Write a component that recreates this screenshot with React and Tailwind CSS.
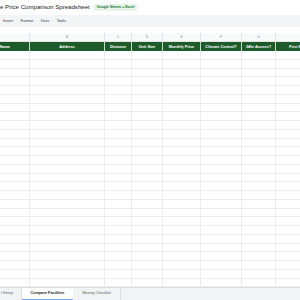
const columns = [
  { letter: 'A', title: 'Facility Name' },
  { letter: 'B', title: 'Address' },
  { letter: 'C', title: 'Distance' },
  { letter: 'D', title: 'Unit Size' },
  { letter: 'E', title: 'Monthly Price' },
  { letter: 'F', title: 'Climate Control?' },
  { letter: 'G', title: '24hr Access?' },
  { letter: 'H', title: 'First Month Free?' }
]

const gridCols = 'grid grid-cols-[64px_75px_27px_31px_38px_41px_34px_60px]'

export default function App() {
  const rows = Array.from({ length: 30 })

  return (
    <div className="w-[300px] h-[300px] overflow-hidden bg-white flex flex-col font-['Liberation_Sans',Arial,sans-serif]">
      {/* Title */}
      <div className="h-[15px] shrink-0 flex items-center gap-[4px]">
        <span className="text-[6.1px] leading-none text-[#202124] whitespace-nowrap">e Price Comparison Spreadsheet</span>
        <span className="bg-[#e6f4ea] text-[#137333] text-[3.5px] leading-none rounded-[2px] px-[3px] py-[1.8px] font-semibold whitespace-nowrap">
          Google Sheets + Excel
        </span>
      </div>

      {/* Menu */}
      <div className="h-[12px] shrink-0 bg-[#f3f4f5] flex items-center pl-[3px] gap-[7.5px] text-[4px] text-[#3c4043]">
        <span>Insert</span>
        <span>Format</span>
        <span>Data</span>
        <span>Tools</span>
      </div>

      {/* Sheet */}
      <div className="flex-1 overflow-hidden pt-[6px]">
        <div className="ml-[-34px] w-[370px]">
          <div className={`${gridCols} h-[9px] bg-[#f8f9fa] border-b border-[#e3e3e3]`}>
            {columns.map((c) => (
              <div key={c.letter} className="flex items-center justify-center border-r border-[#e3e3e3] text-[3.2px] text-[#80868b]">
                {c.letter}
              </div>
            ))}
          </div>
          <div className={`${gridCols} h-[9px] bg-[#1e5b2a]`}>
            {columns.map((c) => (
              <div key={c.letter} className="flex items-center justify-center border-r border-[#c8d6c9] text-[3.9px] font-bold text-white whitespace-nowrap overflow-hidden">
                {c.title}
              </div>
            ))}
          </div>
          {rows.map((_, i) => (
            <div key={i} className={`${gridCols} h-[8.75px] border-b border-[#ececec]`}>
              {columns.map((c) => (
                <div key={c.letter} className="border-r border-[#ececec]" />
              ))}
            </div>
          ))}
        </div>
      </div>

      {/* Tabs */}
      <div className="h-[13px] shrink-0 bg-[#f1f3f4] border-t border-[#dadce0] flex items-stretch text-[3.8px] text-[#5f6368]">
        <div className="w-[22px] flex items-center pl-[1px] border-r border-[#e0e0e0]">t Setup</div>
        <div className="w-[51px] bg-white flex items-center justify-center font-bold text-[#202124] border-b-[1.5px] border-[#7baaf7]">
          Compare Facilities
        </div>
        <div className="w-[48px] flex items-center justify-center border-r border-[#e0e0e0]">Moving Checklist</div>
      </div>
    </div>
  )
}
